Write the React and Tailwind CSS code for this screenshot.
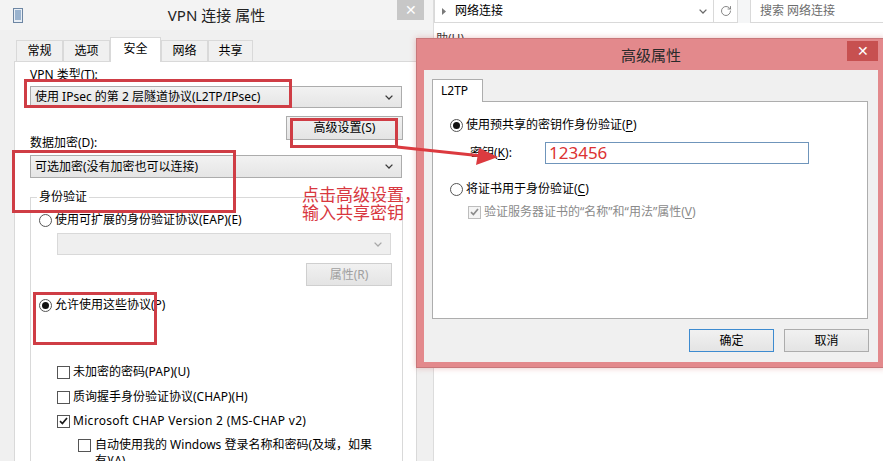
import { RotateCw } from 'lucide-react';

const redBox = 'absolute border-[3px] border-[#cf3d45]';

function Chevron({ color = '#3a3a3a' }) {
  return (
    <svg width="8" height="5" viewBox="0 0 8 5">
      <path d="M0.6 0.6 L4 4 L7.4 0.6" fill="none" stroke={color} strokeWidth="1.3" />
    </svg>
  );
}

function Select({ text, className = '', disabled }) {
  return (
    <div
      className={`flex items-center justify-between border pl-[4px] pr-[8px] leading-[16px] ${
        disabled ? 'border-[#d9d9d9] bg-[#efefef]' : 'border-[#acacac] bg-linear-to-b from-[#f2f2f2] to-[#e5e5e5]'
      } ${className}`}
    >
      <span>{text}</span>
      <Chevron color={disabled ? '#a8a8a8' : '#3a3a3a'} />
    </div>
  );
}

function Button({ children, className = '', disabled, primary }) {
  return (
    <div
      className={`flex items-center justify-center border bg-linear-to-b from-[#f1f1f1] to-[#e4e4e4] leading-[16px] ${
        primary ? 'border-[#3d8bd0]' : disabled ? 'border-[#cfcfcf] text-[#a0a0a0]' : 'border-[#acacac]'
      } ${className}`}
    >
      {children}
    </div>
  );
}

function Radio({ checked }) {
  return (
    <span className="flex h-[13px] w-[13px] shrink-0 items-center justify-center rounded-full border border-[#555] bg-white">
      {checked && <span className="h-[7px] w-[7px] rounded-full bg-[#111]" />}
    </span>
  );
}

function Check({ checked, disabled }) {
  return (
    <span
      className={`flex h-[13px] w-[13px] shrink-0 items-center justify-center border ${
        disabled ? 'border-[#bdbdbd] bg-[#f4f4f4]' : 'border-[#555] bg-white'
      }`}
    >
      {checked && (
        <svg width="9" height="8" viewBox="0 0 9 8">
          <path d="M1 4.2 L3.4 6.6 L8 1" fill="none" stroke={disabled ? '#8c8c8c' : '#1a1a1a'} strokeWidth="1.7" />
        </svg>
      )}
    </span>
  );
}

function Row({ children, className = '' }) {
  return <div className={`flex h-[16px] items-center gap-[3px] leading-[16px] ${className}`}>{children}</div>;
}

function U({ children }) {
  return <span className="underline underline-offset-[2px]">{children}</span>;
}

function Tab({ label, width, active }) {
  return (
    <div
      className={`flex items-center justify-center border-l border-r border-t border-[#d9d9d9] leading-[16px] ${
        active ? 'relative z-10 -mb-px h-[25px] bg-white pb-[3px]' : 'h-[21px] bg-[#f0f0f0]'
      }`}
      style={{ width }}
    >
      {label}
    </div>
  );
}

function VpnProperties() {
  return (
    <div className="absolute left-0 top-0 h-[480px] w-[433px] bg-[#f0f0f0]">
      <div className="grid h-[30px] grid-cols-[1fr_auto_1fr] items-center bg-[#f3f3f3]">
        <div className="pl-[13px] pt-[1px]">
          <svg width="10" height="15" viewBox="0 0 10 15">
            <rect x="0.5" y="0.5" width="9" height="14" fill="#e8eef5" stroke="#6d86a3" />
            <path d="M2 3h6M2 5h6M2 7h6M2 9h6M2 11h6" stroke="#4d78a8" strokeWidth="1" />
          </svg>
        </div>
        <div className="text-[15px] leading-[20px] text-[#222]">VPN 连接 属性</div>
        <div className="flex justify-end self-start pr-[9px]">
          <div className="flex h-[20px] w-[27px] items-center justify-center bg-[#c7c7c7] text-[14px] leading-none text-white">
            ✕
          </div>
        </div>
      </div>

      <div className="pl-[14px] pr-[16px] pt-[8px]">
        <div className="flex h-[23px] items-end pl-[2px]">
          <Tab label="常规" width={47} />
          <Tab label="选项" width={47} />
          <Tab label="安全" width={51} active />
          <Tab label="网络" width={47} />
          <Tab label="共享" width={45} />
        </div>
        <div className="h-[420px] border border-[#d9d9d9] bg-white pl-[15px] pt-[5px]">
          <div className="w-[373px]">
            <div className="leading-[16px]">VPN 类型(T):</div>
            <Select className="mt-[3px] h-[22px] w-[372px]" text="使用 IPsec 的第 2 层隧道协议(L2TP/IPsec)" />
            <div className="mt-[8px] flex justify-end">
              <Button className="h-[24px] w-[117px]">高级设置(S)</Button>
            </div>
            <div className="-mt-[5px] leading-[16px]">数据加密(D):</div>
            <Select className="mt-[4px] h-[23px] w-[372px]" text="可选加密(没有加密也可以连接)" />

            <fieldset className="mt-[11px] h-[300px] w-[373px] border border-[#d9d9d9]">
              <legend className="ml-[6px] px-[2px] leading-[16px]">身份验证</legend>
              <Row className="ml-[8px] mt-[7px]">
                <Radio />
                使用可扩展的身份验证协议(EAP)(E)
              </Row>
              <Select disabled className="ml-[26px] mt-[5px] h-[22px] w-[334px]" text="" />
              <div className="mt-[8px] flex justify-end pr-[10px]">
                <Button disabled className="h-[23px] w-[86px]">
                  属性(R)
                </Button>
              </div>
              <Row className="ml-[8px] mt-[11px]">
                <Radio checked />
                允许使用这些协议(P)
              </Row>
              <Row className="ml-[26px] mt-[51px]">
                <Check />
                未加密的密码(PAP)(U)
              </Row>
              <Row className="ml-[26px] mt-[9px]">
                <Check />
                质询握手身份验证协议(CHAP)(H)
              </Row>
              <Row className="ml-[26px] mt-[8px] tracking-[0.3px]">
                <Check checked />
                Microsoft CHAP Version 2 (MS-CHAP v2)
              </Row>
              <div className="ml-[47px] mt-[8px] flex items-start gap-[4px] leading-[16px]">
                <span className="pt-[2px]">
                  <Check />
                </span>
                <span>
                  自动使用我的 Windows 登录名称和密码(及域，如果
                  <br />
                  有)(A)
                </span>
              </div>
            </fieldset>
          </div>
        </div>
      </div>
    </div>
  );
}

function Explorer() {
  return (
    <div className="absolute left-[433px] top-0 h-[461px] w-[450px] border-l border-[#dcdcdc] bg-white">
      <div className="flex h-[23px] bg-[#f5f6f7]">
        <div className="flex w-[304px] items-stretch border border-t-0 border-[#d9d9d9] bg-white">
          <div className="flex items-center pl-[7px] pr-[9px]">
            <svg width="4" height="7" viewBox="0 0 4 7">
              <path d="M0 0 L4 3.5 L0 7 Z" fill="#7a7a7a" />
            </svg>
          </div>
          <div className="flex flex-1 items-center leading-[16px]">网络连接</div>
          <div className="flex w-[20px] items-center justify-center">
            <Chevron color="#6a6a6a" />
          </div>
          <div className="flex w-[24px] items-center justify-center border-l border-[#d9d9d9] text-[#7a7a7a]">
            <RotateCw size={12} strokeWidth={1.8} />
          </div>
        </div>
        <div className="ml-[12px] flex flex-1 items-center border border-t-0 border-r-0 border-[#d9d9d9] bg-white pl-[9px] leading-[16px] text-[#6d6d6d]">
          搜索 网络连接
        </div>
      </div>
      <div className="pl-[2px] pt-[8px] leading-[16px] text-[#333]">助(H)</div>
    </div>
  );
}

function AdvancedDialog() {
  return (
    <div className="absolute left-[416px] top-[38px] h-[330px] w-[470px] border border-[#c8777a] bg-[#e3898c] px-[7px] shadow-[0_0_6px_rgba(200,80,80,0.35)]">
      <div className="grid h-[31px] grid-cols-[1fr_auto_1fr] items-center">
        <div />
        <div className="text-[15px] leading-[20px] text-[#2a2a2a]">高级属性</div>
        <div className="flex justify-end self-start pt-[2px]">
          <div className="flex h-[20px] w-[31px] items-center justify-center bg-[#c75050] text-[14px] leading-none text-white">
            ✕
          </div>
        </div>
      </div>
      <div className="h-[292px] bg-[#f0f0f0] pl-[8px] pt-[9px]">
        <div className="relative z-10 -mb-px flex h-[23px] w-[51px] items-center border-l border-r border-t border-[#adadad] bg-white pb-[1px] pl-[8px] leading-[16px]">
          L2TP
        </div>
        <div className="h-[218px] w-[436px] border border-[#adadad] bg-white pl-[17px] pt-[15px]">
          <Row>
            <Radio checked />
            <span>
              使用预共享的密钥作身份验证(<U>P</U>)
            </span>
          </Row>
          <div className="mt-[9px] flex items-center">
            <span className="w-[95px] pl-[20px] leading-[16px]">
              密钥(<U>K</U>):
            </span>
            <div className="flex h-[22px] w-[264px] items-center border border-[#6f95bb] pl-[3px] text-[17px] leading-[20px] text-[#dc3232]">
              123456
            </div>
          </div>
          <Row className="mt-[17px]">
            <Radio />
            <span>
              将证书用于身份验证(<U>C</U>)
            </span>
          </Row>
          <Row className="ml-[18px] mt-[7px] text-[#8a8a8a]">
            <Check checked disabled />
            <span>
              验证服务器证书的“名称”和“用法”属性(<U>V</U>)
            </span>
          </Row>
        </div>
        <div className="mt-[10px] flex w-[437px] justify-end gap-[10px]">
          <Button primary className="h-[23px] w-[85px]">
            确定
          </Button>
          <Button className="h-[23px] w-[85px]">取消</Button>
        </div>
      </div>
    </div>
  );
}

export default function App() {
  return (
    <div className="relative h-[461px] w-[883px] overflow-hidden bg-white font-['Noto_Sans','Noto_Sans_CJK_SC',sans-serif] text-[12px] text-black">
      <Explorer />
      <VpnProperties />
      <AdvancedDialog />

      <div className={`${redBox} left-[24px] top-[79px] h-[29px] w-[268px]`} />
      <div className={`${redBox} left-[290px] top-[118px] h-[30px] w-[108px]`} />
      <div className={`${redBox} left-[12px] top-[150px] h-[63px] w-[224px]`} />
      <div className={`${redBox} left-[33px] top-[292px] h-[53px] w-[124px]`} />

      <div className="absolute left-[302px] top-[186px] text-[17px] leading-[18px] text-[#d8383f]">
        点击高级设置，
        <br />
        输入共享密钥
      </div>

      <svg className="absolute left-0 top-0" width="883" height="461" viewBox="0 0 883 461">
        <line x1="397" y1="147" x2="482" y2="156" stroke="#dc3a3f" strokeWidth="3" />
        <polygon points="498,157 479,148 476,165" fill="#dc3a3f" />
      </svg>
    </div>
  );
}
